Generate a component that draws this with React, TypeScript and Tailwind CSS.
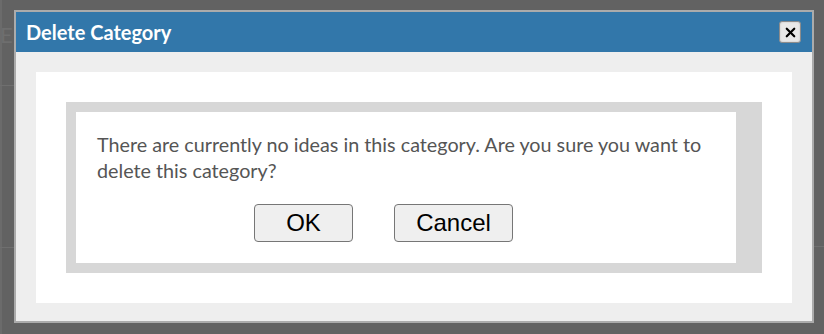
import { X } from "lucide-react"

export default function App() {
  return (
    <div className="relative flex h-[334px] w-[824px] items-start overflow-hidden bg-[#626262] pl-[14px] pt-[10px] font-['Lato','Liberation_Sans',sans-serif]">
      {/* page showing through the overlay */}
      <div className="absolute left-0 top-0 h-full w-[2px] bg-[#6b6b6b]" />
      <div className="absolute left-0 top-[24px] text-[22px] leading-none text-[#6e6e6e]">E</div>
      <div className="absolute left-0 top-[85px] h-px w-[14px] bg-[#6f6f6f]" />
      <div className="absolute left-0 top-[247px] h-px w-[14px] bg-[#6f6f6f]" />
      <div className="absolute left-[814px] top-[246px] h-px w-[10px] bg-[#6f6f6f]" />

      {/* dialog */}
      <div className="relative w-[800px] border-2 border-[#ababab] bg-[#eeeeee]">
        <div className="flex h-[40px] items-center justify-between bg-[#3277aa] pl-[10px] pr-[11px]">
          <span className="text-[20px] font-bold text-white">Delete Category</span>
          <button className="flex h-[22px] w-[22px] items-center justify-center rounded-[3px] border border-[#8c8c8c] bg-[#e9e9e9] shadow-[inset_0_0_2px_#bbb]">
            <X size={15} strokeWidth={3.5} className="text-black" />
          </button>
        </div>

        <div className="p-[20px] pb-[18px]">
          <div className="bg-white p-[30px]">
            <div className="bg-[#d7d7d7] p-[10px] pr-[26px]">
              <div className="bg-white pb-[21px] pl-[21px] pt-[20px]">
                <p className="text-[19.75px] leading-[26px] text-[#555555]">
                  There are currently no ideas in this category. Are you sure you want to delete this category?
                </p>
                <div className="mt-[20px] flex gap-[41px] pl-[157px]">
                  <button className="h-[38px] w-[99px] rounded-[4px] border border-[#767676] bg-[#efefef] font-['Liberation_Sans',Arial,sans-serif] text-[24px] text-black">
                    OK
                  </button>
                  <button className="h-[38px] w-[119px] rounded-[4px] border border-[#767676] bg-[#efefef] font-['Liberation_Sans',Arial,sans-serif] text-[24px] text-black">
                    Cancel
                  </button>
                </div>
              </div>
            </div>
          </div>
        </div>
      </div>
    </div>
  )
}
